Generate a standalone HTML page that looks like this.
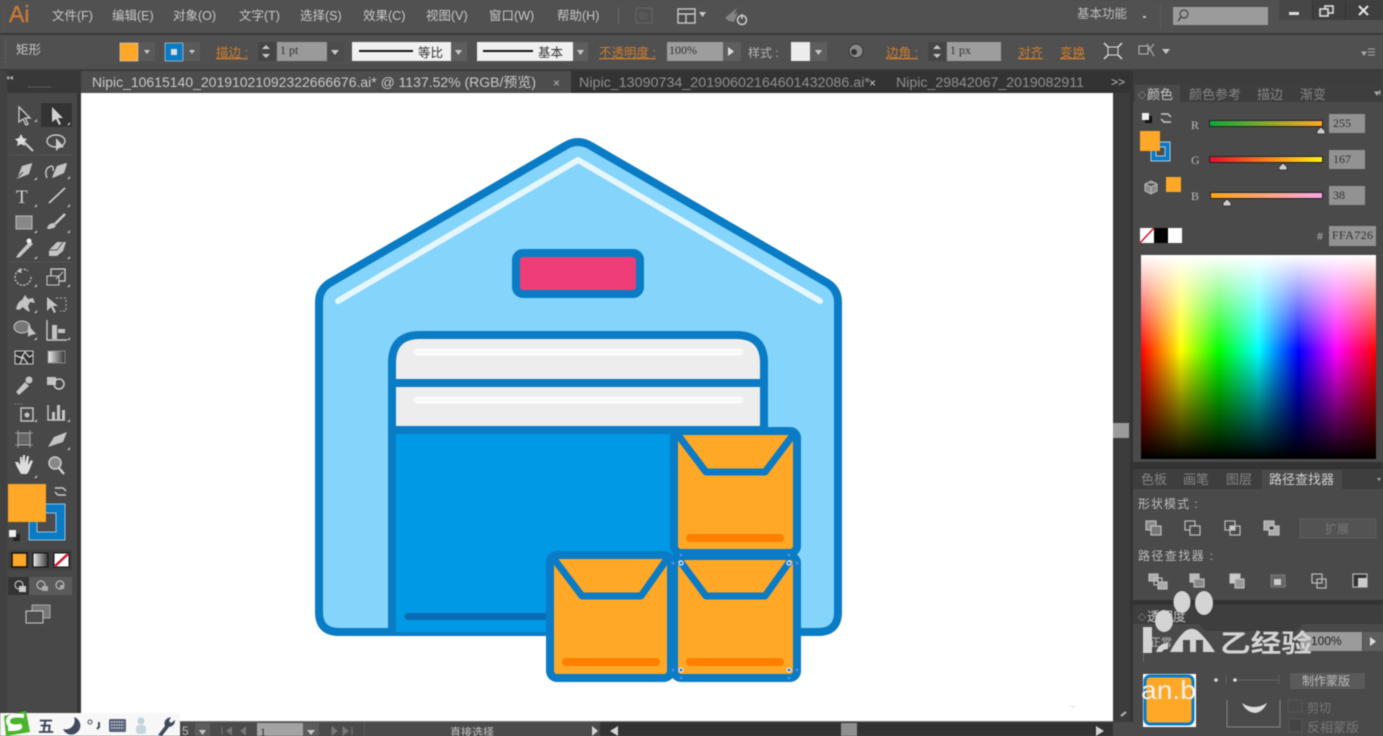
<!DOCTYPE html>
<html><head><meta charset="utf-8"><style>
html,body{margin:0;padding:0;background:#4a4a4a;width:1383px;height:736px;overflow:hidden}
svg{display:block;font-family:"Liberation Sans","Noto Sans CJK SC",sans-serif;filter:blur(.45px)}
.m{font-size:12.5px;fill:#c8c8c8}
.o{font-size:12.5px;fill:#cf7d2c;text-decoration:underline}
.s{font-family:"Liberation Serif","Noto Serif CJK SC",serif;font-size:12px;fill:#333}
.d{font-size:13px;fill:#858585}
.i{fill:none;stroke:#c8c8c8;stroke-width:1.4}
.f{fill:#c4c4c4}
.p{fill:none;stroke:#bdbdbd;stroke-width:1.2}
.a{fill:#c8c8c8}
</style></head><body>
<svg xmlns="http://www.w3.org/2000/svg" width="1383" height="736" viewBox="0 0 1383 736">
<defs>
<linearGradient id="hue" x1="0" x2="1" y1="0" y2="0"><stop offset="0" stop-color="#f00"/><stop offset=".17" stop-color="#ff0"/><stop offset=".33" stop-color="#0f0"/><stop offset=".5" stop-color="#0ff"/><stop offset=".67" stop-color="#00f"/><stop offset=".83" stop-color="#f0f"/><stop offset="1" stop-color="#f00"/></linearGradient>
<linearGradient id="wh" x1="0" x2="0" y1="0" y2="1"><stop offset="0" stop-color="#fff"/><stop offset=".47" stop-color="#fff" stop-opacity="0"/></linearGradient>
<linearGradient id="bl" x1="0" x2="0" y1="0" y2="1"><stop offset=".47" stop-color="#000" stop-opacity="0"/><stop offset="1" stop-color="#000"/></linearGradient>
<linearGradient id="r" x1="0" x2="1" y1="0" y2="0"><stop offset="0" stop-color="#0da73a"/><stop offset="1" stop-color="#ffa726"/></linearGradient>
<linearGradient id="g" x1="0" x2="1" y1="0" y2="0"><stop offset="0" stop-color="#e5112a"/><stop offset="1" stop-color="#ffef1c"/></linearGradient>
<linearGradient id="b" x1="0" x2="1" y1="0" y2="0"><stop offset="0" stop-color="#ffa416"/><stop offset="1" stop-color="#ffa6e8"/></linearGradient>
<linearGradient id="gr" x1="0" x2="1" y1="0" y2="0"><stop offset="0" stop-color="#eee"/><stop offset="1" stop-color="#333"/></linearGradient>
</defs>

<!-- base -->
<rect width="1383" height="736" fill="#4a4a4a"/>
<rect width="1383" height="33" fill="#515151"/>
<rect y="33" width="1383" height="2" fill="#3a3a3a"/>
<rect y="35" width="1383" height="35" fill="#505050"/>
<rect y="69" width="1383" height="2" fill="#3b3b3b"/>
<rect y="71" width="81" height="22" fill="#383838"/>
<rect x="81" y="71" width="1052" height="22" fill="#333"/>
<rect x="1133" y="71" width="250" height="13" fill="#3d3d3d"/>

<!-- menu -->
<text x="9" y="22" font-size="23" fill="#c77a35" stroke="#c77a35" stroke-width=".4">Ai</text>
<text class="m" x="52" y="20">文件(F)</text>
<text class="m" x="112" y="20">编辑(E)</text>
<text class="m" x="173" y="20">对象(O)</text>
<text class="m" x="239" y="20">文字(T)</text>
<text class="m" x="300" y="20">选择(S)</text>
<text class="m" x="363" y="20">效果(C)</text>
<text class="m" x="426" y="20">视图(V)</text>
<text class="m" x="489" y="20">窗口(W)</text>
<text class="m" x="557" y="20">帮助(H)</text>
<rect x="618" y="8" width="1" height="16" fill="#656565"/>
<rect x="636" y="8" width="16" height="15" fill="none" stroke="#666"/>
<text x="639" y="19" font-size="9" fill="#666">Br</text>
<rect x="678" y="9" width="17" height="14" fill="#4a4a4a" stroke="#c8c8c8" stroke-width="1.4"/>
<path d="M678 14H695M686 14V23" stroke="#c8c8c8" stroke-width="1.4"/>
<path d="M699 12h7l-3.500 5z" class="a"/>
<path d="M725 18l12-10-3 7 4-3-4 10-5-1z" fill="#858585"/>
<circle cx="742" cy="20" r="4.500" fill="none" stroke="#ccc" stroke-width="1.500"/><path d="M742 14v5" stroke="#ccc" stroke-width="1.500"/>
<text x="1077" y="18" font-size="12.500" fill="#bdbdbd">基本功能</text>
<rect x="1143" y="16" width="3" height="2" fill="#bbb"/>
<rect x="1160" y="6" width="1" height="22" fill="#5e5e5e"/>
<rect x="1173" y="7" width="95" height="18" fill="#9b9b9b"/>
<circle cx="1184" cy="14" r="4" fill="none" stroke="#444" stroke-width="1.200"/><path d="M1181 17l-3 4" stroke="#444" stroke-width="1.400"/>
<rect x="1279" y="0" width="104" height="20" fill="#3f3f3f"/>
<rect x="1279" y="0" width="33" height="20" fill="#474747"/><rect x="1312" y="0" width="1" height="20" fill="#333"/><rect x="1345" y="0" width="1" height="20" fill="#333"/>
<rect x="1289" y="12" width="10" height="3" fill="#ddd"/>
<rect x="1325" y="6" width="8" height="7" fill="none" stroke="#ddd" stroke-width="1.600"/><rect x="1320" y="9" width="8" height="7" fill="#474747" stroke="#ddd" stroke-width="1.600"/>
<path d="M1359 6l9 9M1368 6l-9 9" stroke="#e6e6e6" stroke-width="2"/>

<!-- control bar -->
<path d="M6 40v24" stroke="#777" stroke-dasharray="1 2"/>
<text class="m" x="16" y="54">矩形</text>
<rect x="120" y="43" width="18" height="18" fill="#ffa726" stroke="#ddd" stroke-width=".6"/>
<rect x="139" y="42" width="16" height="19" fill="#5a5a5a"/><path d="M144 50h6l-3 4z" class="a"/>
<rect x="165" y="43" width="18" height="18" fill="#0a7bc5" stroke="#ddd" stroke-width=".6"/><rect x="171" y="49" width="6" height="6" fill="#ddd"/>
<rect x="184" y="42" width="16" height="19" fill="#5a5a5a"/><path d="M189 50h6l-3 4z" class="a"/>
<text class="o" x="216" y="57" font-size="12">描边 :</text>
<rect x="258" y="42" width="18" height="19" fill="#454545"/><path d="M262 49h8l-4-4zM262 54h8l-4 4z" class="a"/>
<rect x="277" y="42" width="50" height="19" fill="#9a9a9a"/><text class="s" x="280" y="54">1 pt</text>
<rect x="327" y="42" width="17" height="19" fill="#4c4c4c"/><path d="M331 50h8l-4 5z" class="a"/>
<rect x="352" y="42" width="99" height="19" fill="#f0f0f0"/><path d="M359 51h54" stroke="#111" stroke-width="2"/>
<text x="418" y="57" font-size="12.500" fill="#333">等比</text>
<rect x="451" y="42" width="16" height="19" fill="#5e5e5e"/><path d="M455 50h7l-3.500 5z" class="a"/>
<rect x="477" y="42" width="96" height="19" fill="#f0f0f0"/><path d="M483 51h50" stroke="#111" stroke-width="2"/>
<text x="538" y="57" font-size="12.500" fill="#333">基本</text>
<rect x="573" y="42" width="15" height="19" fill="#5e5e5e"/><path d="M577 50h7l-3.500 5z" class="a"/>
<text class="o" x="599" y="57" font-size="12">不透明度 :</text>
<rect x="667" y="42" width="56" height="19" fill="#9d9d9d"/><text class="s" x="669" y="54">100%</text>
<rect x="723" y="42" width="18" height="19" fill="#5e5e5e"/><path d="M728 47l6 4.500-6 4.500z" fill="#ddd"/>
<text x="748" y="57" font-size="12" fill="#b5b5b5">样式 :</text>
<rect x="791" y="42" width="19" height="19" fill="#ececec"/>
<rect x="810" y="42" width="17" height="19" fill="#5e5e5e"/><path d="M815 50h7l-3.500 5z" class="a"/>
<circle cx="856" cy="51" r="7" fill="#8a8a8a" stroke="#333"/><circle cx="854" cy="52" r="3" fill="#333"/>
<text class="o" x="886" y="57" font-size="12">边角 :</text>
<rect x="928" y="42" width="18" height="19" fill="#454545"/><path d="M933 49h8l-4-4zM933 54h8l-4 4z" class="a"/>
<rect x="947" y="42" width="54" height="19" fill="#9d9d9d"/><text class="s" x="950" y="54">1 px</text>
<text class="o" x="1018" y="57" font-size="12">对齐</text>
<text class="o" x="1060" y="57" font-size="12">变换</text>
<rect x="1108" y="47" width="10" height="8" fill="none" stroke="#ddd"/><path d="M1104 43l4 4M1122 43l-4 4M1104 59l4-4M1122 59l-4-4" stroke="#ddd" stroke-width="1.500"/>
<rect x="1139" y="46" width="9" height="8" fill="none" stroke="#bbb"/><path d="M1147 44l7 12M1154 44l-6 7" stroke="#999" stroke-width="1.500"/>
<path d="M1162 49h8l-4 5z" class="a"/>
<path d="M1362 52h4l-2 3zM1368 49h7M1368 52h7M1368 55h7" stroke="#aaa" fill="#aaa"/>

<!-- tabs -->
<rect x="81" y="71" width="490" height="22" fill="#4d4d4d"/>
<text x="5" y="80" font-size="8" fill="#aaa">◂◂</text>
<text x="92" y="87" font-size="13.500" fill="#c9c9c9" textLength="444" lengthAdjust="spacingAndGlyphs">Nipic_10615140_20191021092322666676.ai* @ 1137.52% (RGB/预览)</text>
<text x="553" y="87" font-size="12" fill="#bbb">×</text>
<text x="579" y="87" font-size="13.500" fill="#8f8f8f" textLength="291" lengthAdjust="spacingAndGlyphs">Nipic_13090734_20190602164601432086.ai*</text>
<text x="869" y="87" font-size="12" fill="#ccc">×</text>
<text x="896" y="87" font-size="13.500" fill="#8f8f8f" textLength="188" lengthAdjust="spacingAndGlyphs">Nipic_29842067_2019082911</text>
<text x="1111" y="86" font-size="12" fill="#bbb">&gt;&gt;</text>

<!-- canvas -->
<rect x="81" y="93" width="1032" height="629" fill="#fff"/>
<rect x="1113" y="93" width="20" height="629" fill="#3c3c3c"/>
<rect x="1113" y="423" width="16" height="15" fill="#9b9b9b"/>
<rect x="1130" y="93" width="3" height="643" fill="#333"/>
<path d="M1121 716l5-4" stroke="#bbb" stroke-width="2"/>
<path d="M1068 705q5 2 9 0l-4 3z" fill="#e6e6e6"/>

<!-- artwork -->
<path d="M319 302Q319 288 333 281L565 146Q578 138 591 146L824 281Q838 288 838 302V612Q838 632 818 632H339Q319 632 319 612Z" fill="#84d4fb" stroke="#0a7bc5" stroke-width="8" stroke-linejoin="round"/>
<path d="M338 301L578 160L820 301" fill="none" stroke="#e6f6fd" stroke-width="6" stroke-linecap="round" stroke-linejoin="round"/>
<rect x="516" y="253" width="124" height="41" rx="7" fill="#ee3d78" stroke="#0a7bc5" stroke-width="8"/>
<path d="M392 632V363Q392 335 420 335H736Q764 335 764 363V430H392" fill="#ededed"/>
<rect x="392" y="430" width="372" height="202" fill="#0099e5"/>
<path d="M392 632V363Q392 335 420 335H736Q764 335 764 363V434" fill="none" stroke="#0a7bc5" stroke-width="8"/>
<path d="M392 383H764M392 430H764" stroke="#0a7bc5" stroke-width="8"/>
<path d="M417 352H740M417 400H740" stroke="#fafafa" stroke-width="7" stroke-linecap="round"/>
<path d="M408 616.500H560" stroke="#0a6cb5" stroke-width="7" stroke-linecap="round"/>

<rect x="674" y="431" width="123" height="122" rx="7" fill="#ffa726" stroke="#0a7bc5" stroke-width="8"/>
<path d="M678 435L706 472H765L793 435" fill="none" stroke="#0a7bc5" stroke-width="7" stroke-linejoin="round"/>
<rect x="686" y="534" width="98" height="8" rx="4" fill="#ff7f00"/>

<rect x="550" y="555" width="121" height="123" rx="7" fill="#ffa726" stroke="#0a7bc5" stroke-width="8"/>
<path d="M554 559L582 596H641L667 559" fill="none" stroke="#0a7bc5" stroke-width="7" stroke-linejoin="round"/>
<rect x="562" y="658" width="98" height="8" rx="4" fill="#ff7f00"/>

<rect x="674" y="556" width="123" height="122" rx="7" fill="#ffa726" stroke="#0a7bc5" stroke-width="8"/>
<path d="M680 561L706 596H765L790 561" fill="none" stroke="#0a7bc5" stroke-width="7" stroke-linejoin="round"/>
<rect x="686" y="658" width="98" height="8" rx="4" fill="#ff7f00"/>
<g fill="#0a7bc5" stroke="#e8e8ff" stroke-width="1.200"><circle cx="681" cy="563" r="2"/><circle cx="789" cy="563" r="2"/><circle cx="681" cy="670" r="2"/><circle cx="789" cy="670" r="2"/></g>
<g fill="#4c8de0"><circle cx="681" cy="555" r="1.500"/><circle cx="789" cy="555" r="1.500"/><circle cx="673" cy="563" r="1.500"/><circle cx="797" cy="563" r="1.500"/><circle cx="673" cy="670" r="1.500"/><circle cx="797" cy="670" r="1.500"/><circle cx="681" cy="678" r="1.500"/><circle cx="789" cy="678" r="1.500"/></g>

<!-- toolbar -->
<rect x="0" y="71" width="7" height="650" fill="#414141"/>
<rect x="7" y="93" width="70" height="630" fill="#484848"/>
<rect x="77" y="93" width="4" height="630" fill="#353535"/>
<path d="M28 87h24" stroke="#777" stroke-dasharray="1 1"/>
<rect x="41" y="103" width="31" height="24" fill="#333"/>
<path d="M19 107v15l4-3 3 6 2-1-3-6h5z" fill="#3e3e3e" stroke="#ccc" stroke-width="1.300"/>
<path d="M52 107v15l4-3 3 6 2-1-3-6h5z" fill="#d2d2d2"/>
<path d="M21 134l2 4 4 1-3 3 1 4-4-2-4 2 1-4-3-3 4-1z" fill="#ddd"/><path d="M24 142l9 9" stroke="#ccc" stroke-width="2"/>
<ellipse cx="56" cy="141" rx="9" ry="6" class="i"/><path d="M56 138v13l3-3 5-1z" fill="#ccc"/>
<path d="M32 163l-10 3-4 10-2 3 3-1 10-4 3-10z" class="f"/><path d="M17 178l6-6" stroke="#444"/>
<path d="M66 163l-9 3-4 9-1 3 3-1 9-4 3-9z" class="f"/><path d="M47 178q-3-8 2-11t4 4" class="i"/>
<text x="16" y="203" font-size="19" font-family="Liberation Serif" fill="#cfcfcf">T</text>
<path d="M49 203L65 188" stroke="#ccc" stroke-width="1.700"/>
<rect x="16" y="216" width="16" height="13" fill="#888" stroke="#bbb"/>
<path d="M65 214l-10 10" stroke="#ccc" stroke-width="2.500"/><path d="M47 229q1-6 7-6l2 3q-2 3-9 3z" class="f"/>
<path d="M30 241l-12 13-2 4 4-1 13-13z" class="f"/><circle cx="29" cy="241" r="2.500" fill="#eee"/>
<path d="M49 250l8-8h9l-3 9-6 5h-8z" class="f"/><path d="M49 250h8l6-8" stroke="#555" fill="none"/>
<path d="M31 277a8 8 0 1 1-3-6" class="i" stroke-dasharray="2 1.500"/><path d="M20 268l-3 4 5 1z" class="f"/>
<rect x="51" y="269" width="14" height="12" class="i"/><rect x="47" y="276" width="12" height="9" fill="#484848" stroke="#c8c8c8"/><path d="M56 279l7-7" stroke="#ccc"/>
<path d="M16 309q2-8 6-9l3-5 3 4 5-1 2 5-5-1-2 4 2 6-4-2-3-3-4 3z" class="f"/>
<path d="M47 297v14l4-4 3 6 2-1-3-6h5z" class="f"/><path d="M56 298h10v13h-6" fill="none" stroke="#bbb" stroke-dasharray="2 2"/>
<ellipse cx="22" cy="327" rx="8" ry="6" fill="#777" stroke="#ccc"/><path d="M28 325v12l3-2 5-1z" class="f"/>
<path d="M47 320v20h20" class="i"/><path d="M52 325h5v14h-5zM58 329h7v4h-7z" class="f"/>
<rect x="15" y="351" width="18" height="13" fill="#333" stroke="#ccc"/><path d="M15 355l6 3 4-6 4 5 4-2M20 364l3-7 5 7" class="i"/>
<rect x="48" y="351" width="17" height="12" fill="url(#gr)" stroke="#888"/>
<path d="M16 392l9-10 4 4-10 9z" class="f"/><circle cx="29" cy="380" r="3.500" class="f"/>
<rect x="47" y="377" width="9" height="8" class="f"/><circle cx="59" cy="384" r="5" fill="none" stroke="#ccc" stroke-width="1.500"/>
<rect x="21" y="408" width="12" height="13" class="i"/><circle cx="27" cy="415" r="2.500" class="f"/><path d="M15 404h8" stroke="#aaa" stroke-dasharray="1 2"/>
<path d="M48 405v15h17" class="i"/><path d="M52 412h3v8h-3zM57 405h3v15h-3zM62 410h3v10h-3z" class="f"/>
<rect x="18" y="433" width="12" height="12" fill="#666" stroke="#bbb"/><path d="M15 433h18M15 445h18M18 430v18M30 430v18" stroke="#aaa" stroke-width=".8"/>
<path d="M48 447l6-10 13-5-4 10-9 3z" class="f"/>
<path d="M17 467l-2-5 3 0 2 3v-8h2v6l1-8h2v8l2-7h2l-1 9 3-5 2 1-4 10-2 3h-6z" fill="#ddd"/>
<circle cx="55" cy="463" r="6" fill="#888" stroke="#ccc" stroke-width="1.500"/><path d="M59 468l5 6" stroke="#ccc" stroke-width="2.500"/>
<g fill="#bbb"><path d="M37 119l-3 3h3zM70 122l-3 3h3zM37 177l-3 3h3zM70 176l-3 3h3zM37 204l-3 3h3zM70 204l-3 3h3zM37 230l-3 3h3zM70 230l-3 3h3zM37 256l-3 3h3zM70 256l-3 3h3zM37 284l-3 3h3zM70 284l-3 3h3zM37 310l-3 3h3zM70 337l-3 3h3zM37 337l-3 3h3zM37 419l-3 3h3zM70 419l-3 3h3zM70 447l-3 3h3zM37 475l-3 3h3z"/></g>
<path d="M9 155H72M9 262H72" stroke="#535353"/>
<rect x="29" y="504" width="36" height="36" fill="#0a7bc5" stroke="#b5d8ee" stroke-width=".8"/>
<rect x="37" y="513" width="19" height="19" fill="#4c4c4c" stroke="#8fc4e6"/>
<rect x="8" y="484" width="38" height="38" fill="#ffa726"/>
<path d="M55 488h8l3 3M66 495h-8l-3-3" class="i"/>
<rect x="13" y="534" width="7" height="7" fill="#222"/><rect x="9" y="530" width="7" height="7" fill="#eee"/>
<rect x="8" y="550" width="64" height="20" fill="#3f3f3f"/>
<rect x="12" y="553" width="15" height="14" fill="#ffa726" stroke="#111" stroke-width="1.500"/>
<rect x="33" y="553" width="15" height="14" fill="url(#gr)" stroke="#111"/>
<rect x="54" y="553" width="15" height="14" fill="#fff" stroke="#111"/><path d="M55 566l13-12" stroke="#d6142b" stroke-width="2.500"/>
<rect x="8" y="577" width="64" height="18" fill="#5a5a5a"/><rect x="8" y="577" width="21" height="18" fill="#333"/>
<g fill="none" stroke="#bbb" stroke-width="1.200"><circle cx="19" cy="585" r="4"/><circle cx="41" cy="585" r="4"/><circle cx="60" cy="585" r="4"/></g>
<rect x="19" y="586" width="7" height="6" fill="#ccc"/><rect x="42" y="586" width="6" height="5" fill="#aaa"/><path d="M60 585h4v4h-4z" fill="#aaa"/>
<rect x="32" y="605" width="18" height="13" fill="#777" stroke="#aaa"/><rect x="26" y="611" width="17" height="12" fill="#4d4d4d" stroke="#ccc"/>

<!-- status bar -->
<rect x="0" y="722" width="1133" height="14" fill="#4b4b4b"/>
<rect x="0" y="721" width="1113" height="1" fill="#777"/>
<rect x="600" y="722" width="513" height="14" fill="#333"/>
<rect x="841" y="723" width="16" height="13" fill="#8f8f8f"/>
<path d="M618 726l-8 5 8 5zM1096 726l8 5-8 5zM592 726l6 5-6 5z" fill="#d5d5d5"/>
<text x="182" y="735" font-size="12" fill="#bbb">5</text>
<rect x="195" y="723" width="15" height="13" fill="#5c5c5c"/><path d="M199 730h7l-3.500 5z" class="a"/>
<path d="M222 727v8M232 727l-5 4 5 4M246 727l-5 4 5 4" stroke="#777" fill="#777"/>
<rect x="257" y="723" width="46" height="13" fill="#a3a3a3"/><text class="s" x="260" y="736">1</text>
<rect x="303" y="723" width="16" height="13" fill="#5c5c5c"/><path d="M307 730h8l-4 5z" class="a"/>
<path d="M332 727l5 4-5 4zM343 727l5 4-5 4zM352 727v8" stroke="#777" fill="#777"/>
<rect x="364" y="722" width="1" height="14" fill="#5a5a5a"/>
<text x="450" y="736" font-size="11" fill="#c5c5c5">直接选择</text>

<!-- IME -->
<rect x="0" y="713" width="180" height="23" fill="#f7f7f7"/>
<path d="M4 716l22-5 4 21-24 4z" fill="#49b52c"/>
<path d="M24 716q-16-2-16 5t12 5q2 3-12 3" fill="none" stroke="#fff" stroke-width="4"/>
<text x="38" y="732" font-size="16" font-weight="bold" fill="#404a5c">五</text>
<path d="M74 717a9 9 0 1 1-11 12 9 9 0 0 0 11-12z" fill="#404a5c"/>
<circle cx="90" cy="722" r="2" fill="none" stroke="#404a5c"/><path d="M99 722v5l-2 2" stroke="#404a5c" stroke-width="2" fill="none"/>
<rect x="109" y="719" width="17" height="13" rx="1.500" fill="#58627a"/><path d="M111 722h13M111 725h13M111 728h13" stroke="#fff" stroke-dasharray="1.500 1"/>
<circle cx="141" cy="721" r="3.500" fill="#bfd3d8"/><rect x="136" y="725" width="10" height="9" rx="3" fill="#c4d8dc"/>
<path d="M158 735l7-9q-2-5 3-8l3-1-2 4 2 2 4-3q0 6-6 7l-7 9z" fill="#404a5c"/>

<!-- color panel -->
<rect x="1133" y="84" width="250" height="18" fill="#3e3e3e"/>
<rect x="1135" y="85" width="45" height="17" fill="#4a4a4a"/>
<text x="1138" y="98" font-size="8" fill="#bbb">◇</text>
<text x="1147" y="99" font-size="13" fill="#c9c9c9">颜色</text>
<text class="d" x="1189" y="99">颜色参考</text>
<text class="d" x="1257" y="99">描边</text>
<text class="d" x="1300" y="99">渐变</text>
<path d="M1375 92h4l-2 3zM1380 90v5" stroke="#aaa" fill="#aaa"/>
<rect x="1145" y="116" width="7" height="7" fill="#111"/><rect x="1142" y="113" width="7" height="7" fill="#eee"/>
<path d="M1161 114h7l3 3M1171 122h-7l-3-3" class="i"/>
<rect x="1151" y="142" width="19" height="19" fill="#0a7bc5" stroke="#cfe6f5" stroke-width=".8"/><rect x="1156" y="147" width="9" height="9" fill="#4c4c4c" stroke="#cfe6f5" stroke-width=".8"/>
<rect x="1140" y="131" width="20" height="20" fill="#ffa726"/>
<path d="M1151 181l6 3v7l-6 3-6-3v-7zM1145 184l6 3 6-3M1151 187v7" fill="#8a8a8a" stroke="#bbb"/>
<rect x="1166" y="177" width="15" height="15" fill="#ffa726"/>
<text x="1191" y="129" font-size="12" font-family="Liberation Serif" fill="#bbb">R</text>
<text x="1191" y="164" font-size="12" font-family="Liberation Serif" fill="#bbb">G</text>
<text x="1191" y="200" font-size="12" font-family="Liberation Serif" fill="#bbb">B</text>
<rect x="1209" y="120" width="114" height="7" fill="#222"/><rect x="1210" y="121" width="112" height="5" fill="url(#r)"/>
<rect x="1209" y="156" width="114" height="7" fill="#222"/><rect x="1210" y="157" width="112" height="5" fill="url(#g)"/>
<rect x="1210" y="192" width="113" height="7" fill="#222"/><rect x="1211" y="193" width="111" height="5" fill="url(#b)"/>
<g fill="#ccc" stroke="#222" stroke-width=".7"><path d="M1317 134v-3l4-4 4 4v3z"/><path d="M1279 170v-3l4-4 4 4v3z"/><path d="M1223 206v-3l4-4 4 4v3z"/></g>
<rect x="1329" y="114" width="36" height="19" fill="#929292"/><text class="s" x="1333" y="127">255</text>
<rect x="1329" y="150" width="36" height="19" fill="#929292"/><text class="s" x="1333" y="163">167</text>
<rect x="1329" y="186" width="36" height="19" fill="#929292"/><text class="s" x="1333" y="199">38</text>
<text x="1317" y="240" font-size="12" font-family="Liberation Serif" fill="#bbb">#</text>
<rect x="1329" y="226" width="47" height="20" fill="#929292"/><text class="s" x="1332" y="239" textLength="41">FFA726</text>
<rect x="1140" y="228" width="14" height="15" fill="#fff"/><path d="M1140 243l14-15" stroke="#d6142b" stroke-width="1.500"/>
<rect x="1154" y="228" width="14" height="15" fill="#000"/><rect x="1168" y="228" width="14" height="15" fill="#fff"/>
<rect x="1141" y="255" width="235" height="204" fill="url(#hue)"/>
<rect x="1141" y="255" width="235" height="204" fill="url(#wh)"/>
<rect x="1141" y="255" width="235" height="204" fill="url(#bl)"/>

<!-- pathfinder -->
<rect x="1133" y="462" width="250" height="7" fill="#333"/>
<rect x="1133" y="469" width="250" height="20" fill="#3e3e3e"/>
<rect x="1262" y="470" width="80" height="19" fill="#4a4a4a"/>
<text class="d" x="1141" y="484">色板</text>
<text class="d" x="1183" y="484">画笔</text>
<text class="d" x="1226" y="484">图层</text>
<text x="1269" y="484" font-size="13" fill="#cfcfcf">路径查找器</text>
<path d="M1377 478h4l-2 3z" fill="#aaa"/>
<text x="1138" y="508" font-size="12" fill="#bbb" letter-spacing="1">形状模式 :</text>
<g class="p">
<rect x="1146" y="521" width="10" height="9" fill="#888"/><rect x="1151" y="526" width="10" height="9" fill="#777"/>
<rect x="1185" y="521" width="10" height="9"/><rect x="1190" y="526" width="10" height="9" fill="#4a4a4a"/>
<rect x="1225" y="521" width="10" height="9"/><rect x="1230" y="526" width="10" height="9"/><rect x="1230" y="526" width="5" height="4" fill="#ccc"/>
<rect x="1264" y="521" width="10" height="9" fill="#aaa"/><rect x="1269" y="526" width="10" height="9" fill="#aaa"/><rect x="1269" y="526" width="5" height="4" fill="#333"/>
</g>
<rect x="1300" y="519" width="76" height="19" fill="#535353" stroke="#5d5d5d"/>
<text x="1325" y="533" font-size="12" fill="#777">扩展</text>
<text x="1138" y="560" font-size="12" fill="#bbb" letter-spacing="1.400">路径查找器 :</text>
<g class="p">
<rect x="1149" y="574" width="9" height="7" fill="#aaa"/><rect x="1154" y="578" width="8" height="7"/><rect x="1158" y="582" width="9" height="7" fill="#aaa"/>
<rect x="1190" y="574" width="9" height="8" fill="#bbb"/><rect x="1194" y="579" width="10" height="8" fill="#888"/>
<rect x="1230" y="574" width="10" height="9" fill="#ccc"/><rect x="1235" y="579" width="9" height="9" fill="#999"/>
<rect x="1271" y="575" width="14" height="12" fill="#666" stroke="#777"/><rect x="1274" y="579" width="7" height="6" fill="#ccc" stroke="none"/>
<rect x="1312" y="574" width="10" height="9"/><rect x="1317" y="579" width="9" height="9"/>
<rect x="1353" y="574" width="14" height="13" fill="#333"/><rect x="1358" y="578" width="9" height="9" fill="#ccc" stroke="none"/>
</g>

<!-- transparency -->
<rect x="1133" y="600" width="250" height="5" fill="#333"/>
<rect x="1133" y="605" width="250" height="19" fill="#3e3e3e"/>
<text x="1138" y="620" font-size="8" fill="#bbb">◇</text>
<text x="1147" y="621" font-size="13" fill="#c9c9c9">透明度</text>
<rect x="1200" y="614" width="102" height="17" rx="8.500" fill="#3e3e3e"/>
<rect x="1143" y="632" width="1" height="30" fill="#666"/>
<rect x="1300" y="632" width="62" height="19" fill="#9b9b9b"/>
<text x="1150" y="646" font-size="11" fill="#bbb">正常</text>
<text x="1311" y="645" font-size="12" fill="#222">100%</text>
<rect x="1363" y="632" width="20" height="19" fill="#5e5e5e"/><path d="M1370 637l6 4.500-6 4.500z" fill="#ddd"/>
<rect x="1143" y="674" width="53" height="53" fill="#fff"/>
<rect x="1145" y="676" width="48" height="48" rx="5" fill="#ffa726" stroke="#0a7bc5" stroke-width="3"/>
<path d="M1226 675v9M1279 675v9M1235 680h44" stroke="#5f5f5f"/>
<circle cx="1216" cy="680" r="1.800" fill="#ddd"/><circle cx="1235" cy="680" r="1.800" fill="#ddd"/>
<rect x="1290" y="673" width="75" height="16" fill="#5a5a5a"/>
<text x="1302" y="685" font-size="12" fill="#bbb">制作蒙版</text>
<path d="M1227 700V727H1280V700" fill="none" stroke="#888"/>
<path d="M1242 703q12 8 25 0q-4 9-12 10q-9-1-13-10z" fill="#ddd"/>
<rect x="1288" y="700" width="14" height="12" fill="#4a4a4a" stroke="#555"/>
<text x="1307" y="712" font-size="12" fill="#777">剪切</text>
<rect x="1289" y="719" width="13" height="13" fill="#444" stroke="#555"/>
<text x="1307" y="732" font-size="13" fill="#777">反相蒙版</text>

<!-- watermark -->
<g fill="#d4d4d4">
<ellipse cx="1182" cy="602" rx="8.500" ry="11"/><ellipse cx="1204" cy="603" rx="9" ry="12"/><ellipse cx="1164" cy="621" rx="9" ry="11"/>
<path d="M1170 652q6-12 14-20 7-6 14-1 9 8 17 21h-12v-12h-7v12h-6v-12h-7v12z"/>
<rect x="1143" y="627" width="9" height="26"/>
<path d="M1156 652q3-9 12-9v6q-5 0-6 3z"/>
</g>
<text x="1220" y="652" font-size="25" font-weight="bold" fill="#d4d4d4" textLength="92" lengthAdjust="spacingAndGlyphs">乙经验</text>
<text x="1141" y="699" font-size="26" fill="#f0f0f0" textLength="55" lengthAdjust="spacingAndGlyphs">an.b</text>
</svg>
</body></html>
